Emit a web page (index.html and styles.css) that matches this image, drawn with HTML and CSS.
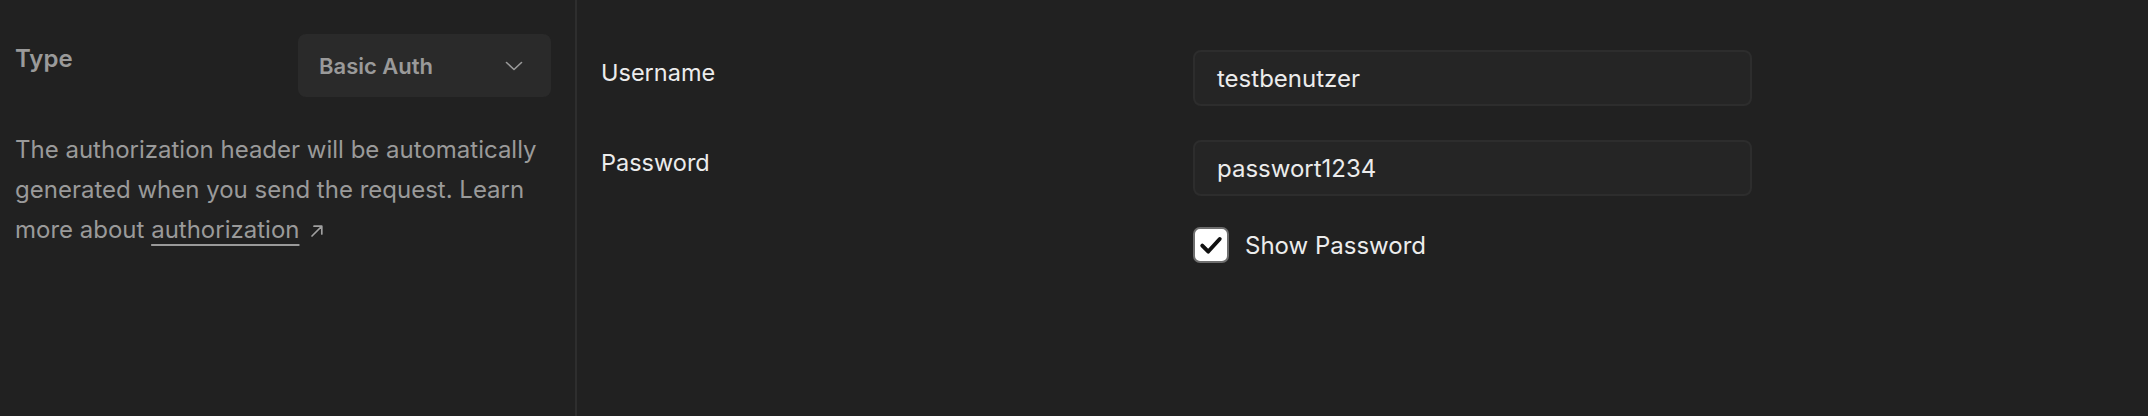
FILE: index.html
```html
<!DOCTYPE html>
<html lang="en">
<head>
<meta charset="utf-8">
<title>Auth</title>
<link rel="stylesheet" href="styles.css">
</head>
<body>
<div class="page">
  <aside class="side">
    <div class="type-row">
      <span class="type-label">Type</span>
      <div class="select">
        <span>Basic Auth</span>
        <svg class="chev" width="18" height="10" viewBox="0 0 18 10"><path d="M1.5 1.5 L9 8.5 L16.5 1.5" fill="none" stroke="#9a9a9a" stroke-width="1.6" stroke-linecap="round" stroke-linejoin="round"/></svg>
      </div>
    </div>
    <p class="desc">The authorization header will be automatically generated when you send the request. Learn more about <a class="link">authorization</a><svg class="ext" width="16" height="16" viewBox="0 0 16 16"><path d="M3 13 L12.5 3.5 M5 3.2 H12.8 V11" fill="none" stroke="#a0a0a0" stroke-width="1.7" stroke-linecap="round" stroke-linejoin="round"/></svg></p>
  </aside>
  <main class="form">
    <div class="row">
      <label class="label">Username</label>
      <div class="field">testbenutzer</div>
    </div>
    <div class="row">
      <label class="label">Password</label>
      <div class="col">
        <div class="field">passwort1234</div>
        <div class="check">
          <span class="box"><svg width="24" height="20" viewBox="0 0 22 18"><path d="M3 9.5 L8.5 15 L19 3.5" fill="none" stroke="#111" stroke-width="3.6" stroke-linecap="round" stroke-linejoin="round"/></svg></span>
          <span>Show Password</span>
        </div>
      </div>
    </div>
  </main>
</div>
</body>
</html>
```

FILE: styles.css
```css
html, body {
  margin: 0;
  padding: 0;
  background: #212121;
  height: 100%;
}
body {
  font-family: Inter, "Noto Sans", sans-serif;
  color: #e6e6e6;
}
.page {
  display: flex;
  height: 416px;
}
.side {
  width: 536px;
  padding: 34px 24px 0 15px;
  border-right: 2px solid #2e2e2e;
  flex: none;
}
.type-row {
  display: flex;
  justify-content: space-between;
  align-items: flex-start;
}
.type-label {
  font-size: 24px;
  font-weight: 600;
  line-height: 26px;
  color: #9a9a9a;
  padding-top: 12px;
}
.select {
  width: 253px;
  height: 63px;
  box-sizing: border-box;
  background: #2a2a2a;
  border-radius: 8px;
  display: flex;
  align-items: center;
  justify-content: space-between;
  padding: 0 28px 0 21px;
  font-size: 22px;
  font-weight: 600;
  color: #9a9a9a;
}
.desc {
  margin: 33px 0 0;
  font-size: 24px;
  line-height: 40px;
  color: #9a9a9a;
}
.link {
  color: #9a9a9a;
  text-decoration: underline;
  text-decoration-thickness: 2px;
  text-underline-offset: 6px;
}
.ext {
  margin-left: 10px;
  vertical-align: -1px;
}
.form {
  flex: 1;
  padding: 50px 0 0 24px;
  display: flex;
  flex-direction: column;
  gap: 34px;
}
.row {
  display: flex;
  align-items: flex-start;
}
.label {
  width: 592px;
  flex: none;
  font-size: 23.5px;
  line-height: 28px;
  padding-top: 9px;
  color: #ececec;
}
.col {
  display: flex;
  flex-direction: column;
  gap: 31px;
}
.field {
  width: 559px;
  height: 56px;
  box-sizing: border-box;
  border: 2px solid #2d2d2d;
  background: #252525;
  border-radius: 8px;
  padding: 0 22px;
  display: flex;
  align-items: center;
  font-size: 24px;
  color: #ececec;
}
.check {
  display: flex;
  align-items: center;
  gap: 16px;
  font-size: 24px;
  color: #ececec;
}
.box {
  width: 36px;
  height: 36px;
  box-sizing: border-box;
  border: 2px solid #6e6e6e;
  border-radius: 7px;
  background: #ffffff;
  display: flex;
  align-items: center;
  justify-content: center;
}
```
